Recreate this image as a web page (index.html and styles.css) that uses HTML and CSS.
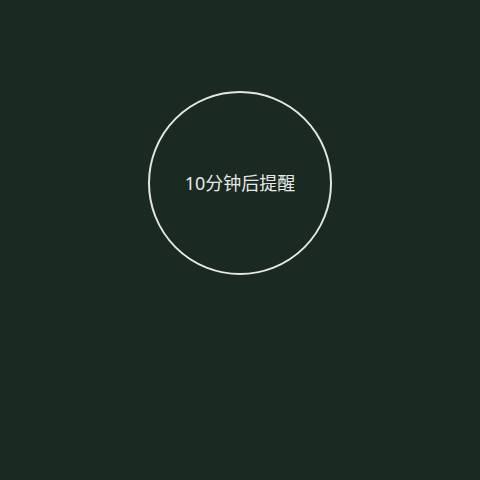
FILE: index.html
```html
<!DOCTYPE html>
<html lang="zh">
<head>
<meta charset="utf-8">
<link rel="stylesheet" href="styles.css">
</head>
<body>
<main class="screen">
  <div class="ring">
    <span class="label">10分钟后提醒</span>
  </div>
</main>
</body>
</html>
```
FILE: styles.css
```css
html, body {
  margin: 0;
  padding: 0;
  background: #1b2923;
}
.screen {
  width: 480px;
  height: 480px;
  display: flex;
  flex-direction: column;
  align-items: center;
  padding-top: 91px;
  box-sizing: border-box;
}
.ring {
  width: 184px;
  height: 184px;
  box-sizing: border-box;
  border: 2px solid #e4e6e4;
  border-radius: 50%;
  display: flex;
  align-items: center;
  justify-content: center;
}
.label {
  font-family: "Noto Sans", "Noto Sans CJK SC", sans-serif;
  font-size: 18px;
  color: #e6e8e6;
  line-height: 1;
}
```
